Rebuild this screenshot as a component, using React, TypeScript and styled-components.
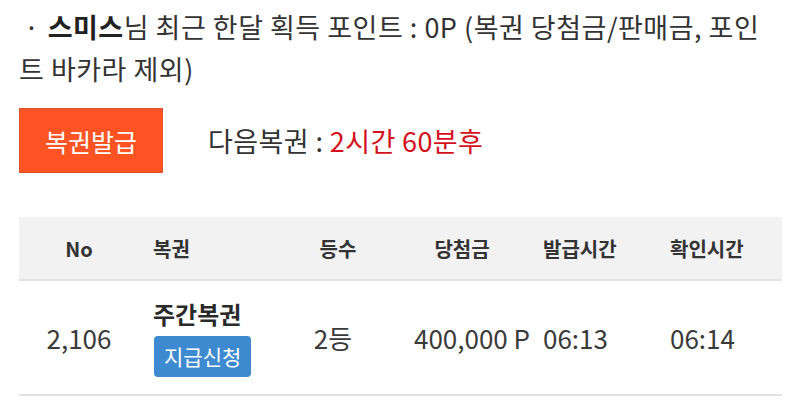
import React from 'react';
import styled, { createGlobalStyle } from 'styled-components';

const GlobalStyle = createGlobalStyle`
  html, body {
    margin: 0;
    padding: 0;
    background: #fff;
  }
  body {
    font-family: "Noto Sans CJK KR", "Noto Sans", sans-serif;
    color: #333;
  }
`;

const Page = styled.div`
  padding: 6px 18px 0 19px;
`;

const Notice = styled.p`
  margin: 0;
  font-size: 27px;
  line-height: 42px;
  letter-spacing: 0.5px;
`;

const Dot = styled.span`
  margin-left: 5px;
  margin-right: 8px;
`;

const Name = styled.b`
  font-weight: 700;
  color: #222;
`;

const IssueRow = styled.div`
  display: flex;
  align-items: center;
  gap: 45px;
  margin-top: 18px;
`;

const IssueButton = styled.button`
  width: 144px;
  height: 65px;
  background: #ff5324;
  border: 1px solid #d9542e;
  color: #fff;
  font-family: inherit;
  font-size: 25px;
  padding: 0;
`;

const NextInfo = styled.div`
  font-size: 27px;
  letter-spacing: 0.4px;
  color: #333;
`;

const Red = styled.span`
  color: #d3101c;
`;

const Table = styled.div`
  margin-top: 44px;
  width: 763px;
`;

const Row = styled.div<{ $head?: boolean }>`
  display: grid;
  grid-template-columns: 120px 151px 96px 152px 127px 1fr;
  align-items: center;
  height: ${(p) => (p.$head ? '62px' : '113px')};
  background: ${(p) => (p.$head ? '#f2f2f2' : '#fff')};
  border-bottom: 2px solid #e2e2e2;
  font-size: ${(p) => (p.$head ? '20px' : '26px')};
  font-weight: ${(p) => (p.$head ? 700 : 400)};
  color: ${(p) => (p.$head ? '#333' : '#3a3a3a')};
`;

const Cell = styled.div<{ $align?: 'left' | 'center'; $shift?: number }>`
  text-align: ${(p) => p.$align || 'center'};
  padding-left: ${(p) => (p.$align === 'left' ? 5 : 0) + Math.max(p.$shift || 0, 0) * 2}px;
  padding-right: ${(p) => Math.max(-(p.$shift || 0), 0) * 2}px;
  white-space: nowrap;
`;

const TicketCell = styled.div`
  display: flex;
  flex-direction: column;
  align-items: flex-start;
  gap: 7px;
  padding-left: 14px;
`;

const TicketName = styled.div`
  font-size: 24px;
  font-weight: 700;
  color: #2a2a2a;
  line-height: 30px;
`;

const ClaimButton = styled.button`
  background: #3d8ad0;
  color: #fff;
  border: none;
  border-radius: 4px;
  font-family: inherit;
  font-size: 21px;
  height: 41px;
  padding: 0 10px;
  margin-left: 1px;
`;

const HeadTicket = styled.div`
  padding-left: 14px;
`;

export default function App() {
  return (
    <>
      <GlobalStyle />
      <Page>
        <Notice>
          <Dot>·</Dot>
          <Name>스미스</Name>님 최근 한달 획득 포인트 : 0P (복권 당첨금/판매금, 포인트 바카라 제외)
        </Notice>
        <IssueRow>
          <IssueButton>복권발급</IssueButton>
          <NextInfo>
            다음복권 : <Red>2시간 60분후</Red>
          </NextInfo>
        </IssueRow>
        <Table>
          <Row $head>
            <Cell>No</Cell>
            <HeadTicket>복권</HeadTicket>
            <Cell>등수</Cell>
            <Cell>당첨금</Cell>
            <Cell $align="left">발급시간</Cell>
            <Cell $align="left">확인시간</Cell>
          </Row>
          <Row>
            <Cell>2,106</Cell>
            <TicketCell>
              <TicketName>주간복권</TicketName>
              <ClaimButton>지급신청</ClaimButton>
            </TicketCell>
            <Cell $shift={-5}>2등</Cell>
            <Cell $shift={10}>400,000 P</Cell>
            <Cell $align="left">06:13</Cell>
            <Cell $align="left">06:14</Cell>
          </Row>
        </Table>
      </Page>
    </>
  );
}
